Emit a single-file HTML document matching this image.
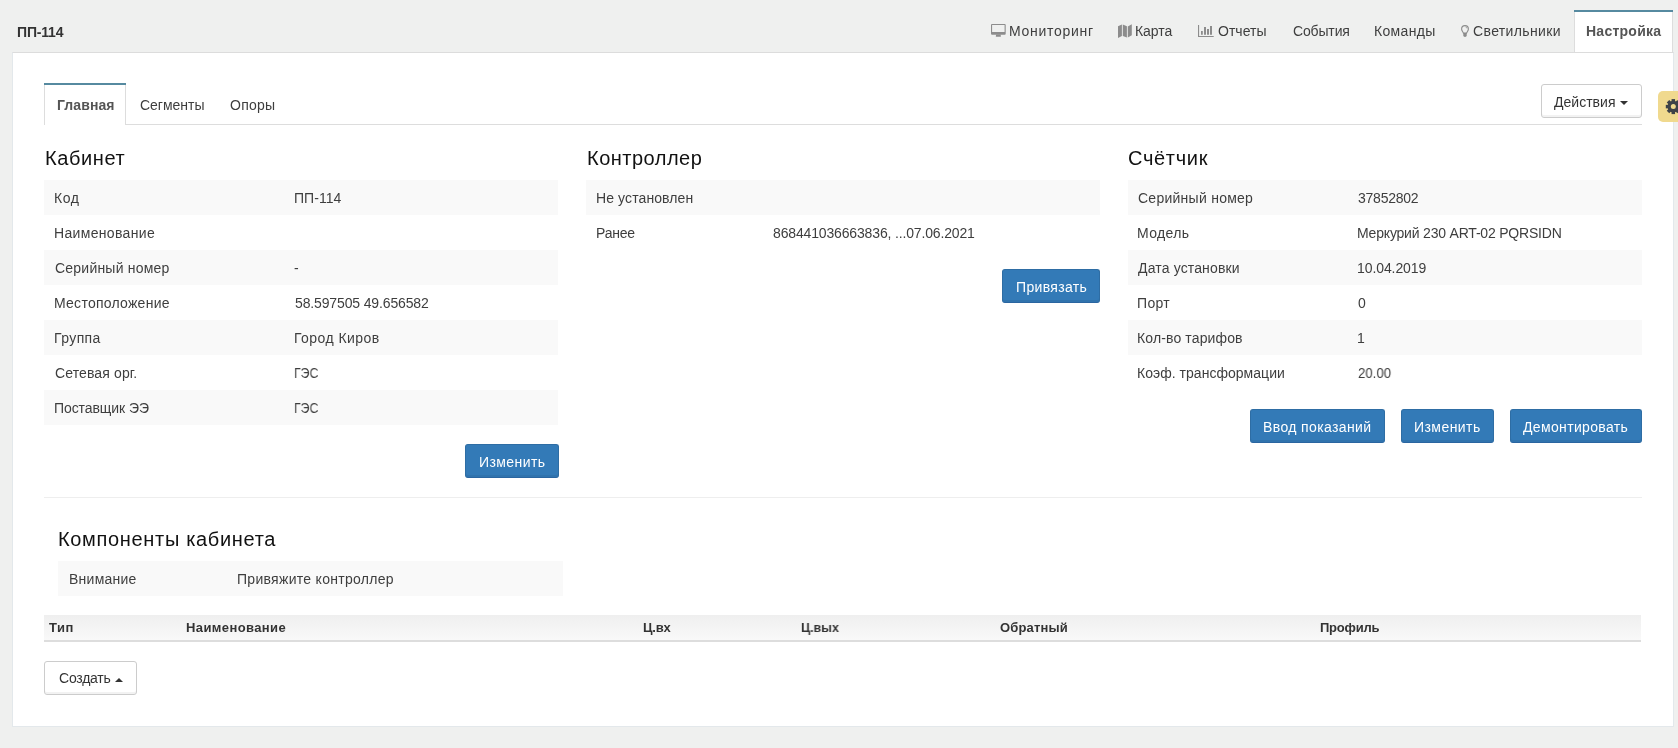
<!DOCTYPE html>
<html><head><meta charset="utf-8">
<style>
html,body{margin:0;padding:0;}
body{width:1678px;height:748px;overflow:hidden;position:relative;background:#eff0ef;font-family:"Liberation Sans",sans-serif;font-size:14px;color:#555;}
.a{position:absolute;}
.t{position:absolute;white-space:nowrap;will-change:transform;}
.panel{position:absolute;left:12px;top:52px;width:1660px;height:673px;background:#fff;border:1px solid #e3e8eb;border-top-color:#dcdcdc;}
.stripe{position:absolute;background:#f9f9f9;height:35px;}
.btnp{position:absolute;background:#337ab7;border:1px solid #2e6da4;border-bottom-color:#2a65a0;border-radius:3px;box-sizing:border-box;height:34px;box-shadow:inset 0 -2px 0 rgba(0,0,0,0.05);}
.btnd{position:absolute;background:#fff;border:1px solid #ccc;border-radius:3px;box-sizing:border-box;height:34px;box-shadow:inset 0 -2px 0 rgba(0,0,0,0.05);}
</style></head><body>

<!-- nav icons -->
<svg class="a" style="left:991px;top:24px" width="15" height="13" viewBox="0 0 15 13"><path fill-rule="evenodd" fill="#8c8c8c" d="M1,0 H13.7 Q14.7,0 14.7,1 V9.7 Q14.7,10.7 13.7,10.7 H1 Q0,10.7 0,9.7 V1 Q0,0 1,0 Z M1.1,1.1 V7.9 H13.6 V1.1 Z"/><path fill="#8c8c8c" d="M5.1,10.5 H9.6 L9.9,12.8 H4.8 Z"/></svg>
<svg class="a" style="left:1118px;top:24px" width="14" height="15" viewBox="0 0 14 15"><path fill="#8c8c8c" d="M0,2.2 L3.9,0.4 V11.9 L0,14 Z M4.8,0.4 L8.9,2.3 V13.6 L4.8,11.9 Z M9.8,2.5 L13.8,0.3 V11.3 L9.8,13.6 Z"/></svg>
<svg class="a" style="left:1198px;top:24px" width="16" height="14" viewBox="0 0 16 14"><path fill="#8c8c8c" d="M0,1 H1.1 V11.9 H15.7 V12.9 H0 Z M3,7 H4.8 V10.7 H3 Z M6,3 H8 V10.7 H6 Z M9,5 H11 V10.7 H9 Z M12,2 H14 V10.7 H12 Z"/></svg>
<svg class="a" style="left:1461px;top:25px" width="8" height="12" viewBox="0 0 8 12"><path d="M4,0.6 C1.8,0.6 0.6,2.3 0.6,4.1 C0.6,5.9 2,6.9 2.4,8.1 H5.6 C6,6.9 7.4,5.9 7.4,4.1 C7.4,2.3 6.2,0.6 4,0.6 Z" fill="none" stroke="#8c8c8c" stroke-width="1.1"/><path d="M2.3,8 H5.7 V10.6 Q5.7,11.9 4,11.9 Q2.3,11.9 2.3,10.6 Z" fill="#8c8c8c"/><path d="M4.6,2 Q5.8,2.4 6,3.4" fill="none" stroke="#8c8c8c" stroke-width="0.8"/></svg>

<!-- panel -->
<div class="panel"></div>

<!-- active nav tab -->
<div class="a" style="left:1574px;top:10px;width:97px;height:42px;background:#fff;border-left:1px solid #ddd;border-right:1px solid #ddd;"></div>
<div class="a" style="left:1574px;top:10px;width:99px;height:2px;background:#568aa0;"></div>

<!-- gear tab -->
<div class="a" style="left:1658px;top:91px;width:30px;height:31px;background:#f0d98e;border-radius:5px;"></div>
<svg class="a" style="left:1665px;top:98px" width="17" height="17" viewBox="-8.3 -8.6 17 17"><g fill="#3e4248"><circle r="5.8"/><rect x="-1.75" y="-7.5" width="3.5" height="15"/><rect x="-1.75" y="-7.5" width="3.5" height="15" transform="rotate(45)"/><rect x="-1.75" y="-7.5" width="3.5" height="15" transform="rotate(90)"/><rect x="-1.75" y="-7.5" width="3.5" height="15" transform="rotate(135)"/></g><circle r="2.5" fill="#f0d98e"/></svg>

<!-- sub tabs -->
<div class="a" style="left:44px;top:124px;width:1598px;height:1px;background:#ddd;"></div>
<div class="a" style="left:44px;top:83px;width:80px;height:42px;background:#fff;border-left:1px solid #ddd;border-right:1px solid #ddd;"></div>
<div class="a" style="left:44px;top:83px;width:82px;height:2px;background:#568aa0;"></div>

<div class="btnd" style="left:1541px;top:84px;width:101px;"></div>
<svg class="a" style="left:1620px;top:101px" width="8" height="4" viewBox="0 0 8 4"><path d="M0 0 H8 L4 4 Z" fill="#333"/></svg>

<!-- stripes -->
<div class="stripe" style="left:44px;top:180px;width:514px;"></div>
<div class="stripe" style="left:44px;top:250px;width:514px;"></div>
<div class="stripe" style="left:44px;top:320px;width:514px;"></div>
<div class="stripe" style="left:44px;top:390px;width:514px;"></div>
<div class="stripe" style="left:586px;top:180px;width:514px;"></div>
<div class="stripe" style="left:1128px;top:180px;width:514px;"></div>
<div class="stripe" style="left:1128px;top:250px;width:514px;"></div>
<div class="stripe" style="left:1128px;top:320px;width:514px;"></div>

<!-- buttons -->
<div class="btnp" style="left:465px;top:444px;width:94px;"></div>
<div class="btnp" style="left:1002px;top:269px;width:98px;"></div>
<div class="btnp" style="left:1250px;top:409px;width:135px;"></div>
<div class="btnp" style="left:1401px;top:409px;width:93px;"></div>
<div class="btnp" style="left:1510px;top:409px;width:132px;"></div>

<!-- hr -->
<div class="a" style="left:44px;top:497px;width:1598px;height:1px;background:#eee;"></div>

<div class="stripe" style="left:58px;top:561px;width:505px;"></div>

<!-- table header -->
<div class="a" style="left:44px;top:615px;width:1597px;height:25px;background:linear-gradient(#efefef,#f9f9f9);border-bottom:2px solid #ddd;"></div>

<div class="btnd" style="left:44px;top:661px;width:93px;"></div>
<svg class="a" style="left:115px;top:678px" width="8" height="4" viewBox="0 0 8 4"><path d="M0 4 H8 L4 0 Z" fill="#333"/></svg>

<div class="t" style="left:17.15px;top:22.15px;font-size:14px;line-height:20px;font-weight:bold;color:#333;letter-spacing:-0.187px;">ПП-114</div>
<div class="t" style="left:1008.60px;top:21.15px;font-size:14px;line-height:20px;font-weight:normal;color:#3e3e3e;letter-spacing:0.718px;">Мониторинг</div>
<div class="t" style="left:1134.50px;top:21.15px;font-size:14px;line-height:20px;font-weight:normal;color:#3e3e3e;letter-spacing:-0.044px;">Карта</div>
<div class="t" style="left:1217.90px;top:21.15px;font-size:14px;line-height:20px;font-weight:normal;color:#3e3e3e;letter-spacing:0.034px;">Отчеты</div>
<div class="t" style="left:1292.90px;top:21.15px;font-size:14px;line-height:20px;font-weight:normal;color:#3e3e3e;letter-spacing:-0.152px;">События</div>
<div class="t" style="left:1374.40px;top:21.15px;font-size:14px;line-height:20px;font-weight:normal;color:#3e3e3e;letter-spacing:0.325px;">Команды</div>
<div class="t" style="left:1472.70px;top:21.15px;font-size:14px;line-height:20px;font-weight:normal;color:#3e3e3e;letter-spacing:0.372px;">Светильники</div>
<div class="t" style="left:1585.70px;top:21.15px;font-size:14px;line-height:20px;font-weight:bold;color:#555;letter-spacing:0.256px;">Настройка</div>
<div class="t" style="left:56.70px;top:95.15px;font-size:14px;line-height:20px;font-weight:bold;color:#555;letter-spacing:0.089px;">Главная</div>
<div class="t" style="left:139.60px;top:95.15px;font-size:14px;line-height:20px;font-weight:normal;color:#3e3e3e;letter-spacing:-0.023px;">Сегменты</div>
<div class="t" style="left:230.00px;top:95.15px;font-size:14px;line-height:20px;font-weight:normal;color:#3e3e3e;letter-spacing:0.239px;">Опоры</div>
<div class="t" style="left:1554.30px;top:92.15px;font-size:14px;line-height:20px;font-weight:normal;color:#333;letter-spacing:0.020px;">Действия</div>
<div class="t" style="left:44.70px;top:144.07px;font-size:20px;line-height:28px;font-weight:normal;color:#111;letter-spacing:0.616px;">Кабинет</div>
<div class="t" style="left:586.70px;top:144.07px;font-size:20px;line-height:28px;font-weight:normal;color:#111;letter-spacing:0.495px;">Контроллер</div>
<div class="t" style="left:1127.50px;top:144.07px;font-size:20px;line-height:28px;font-weight:normal;color:#111;letter-spacing:0.698px;">Счётчик</div>
<div class="t" style="left:54.40px;top:188.15px;font-size:14px;line-height:20px;font-weight:normal;color:#3e3e3e;letter-spacing:0.533px;">Код</div>
<div class="t" style="left:54.40px;top:223.15px;font-size:14px;line-height:20px;font-weight:normal;color:#3e3e3e;letter-spacing:0.331px;">Наименование</div>
<div class="t" style="left:55.40px;top:258.15px;font-size:14px;line-height:20px;font-weight:normal;color:#3e3e3e;letter-spacing:0.219px;">Серийный номер</div>
<div class="t" style="left:54.40px;top:293.15px;font-size:14px;line-height:20px;font-weight:normal;color:#3e3e3e;letter-spacing:0.257px;">Местоположение</div>
<div class="t" style="left:54.40px;top:328.15px;font-size:14px;line-height:20px;font-weight:normal;color:#3e3e3e;letter-spacing:0.403px;">Группа</div>
<div class="t" style="left:55.40px;top:363.15px;font-size:14px;line-height:20px;font-weight:normal;color:#3e3e3e;letter-spacing:0.120px;">Сетевая орг.</div>
<div class="t" style="left:54.40px;top:398.15px;font-size:14px;line-height:20px;font-weight:normal;color:#3e3e3e;letter-spacing:-0.077px;">Поставщик ЭЭ</div>
<div class="t" style="left:293.60px;top:188.15px;font-size:14px;line-height:20px;font-weight:normal;color:#3e3e3e;letter-spacing:0.036px;">ПП-114</div>
<div class="t" style="left:294.40px;top:258.15px;font-size:14px;line-height:20px;font-weight:normal;color:#3e3e3e;letter-spacing:0.000px;">-</div>
<div class="t" style="left:294.50px;top:293.15px;font-size:14px;line-height:20px;font-weight:normal;color:#3e3e3e;letter-spacing:-0.137px;">58.597505 49.656582</div>
<div class="t" style="left:293.50px;top:328.15px;font-size:14px;line-height:20px;font-weight:normal;color:#3e3e3e;letter-spacing:0.450px;">Город Киров</div>
<div class="t" style="left:293.63px;top:363.15px;font-size:14px;line-height:20px;font-weight:normal;color:#3e3e3e;letter-spacing:0.000px;transform:scaleX(0.8745);transform-origin:0 0;">ГЭС</div>
<div class="t" style="left:293.63px;top:398.15px;font-size:14px;line-height:20px;font-weight:normal;color:#3e3e3e;letter-spacing:0.000px;transform:scaleX(0.8745);transform-origin:0 0;">ГЭС</div>
<div class="t" style="left:596.40px;top:188.15px;font-size:14px;line-height:20px;font-weight:normal;color:#3e3e3e;letter-spacing:0.103px;">Не установлен</div>
<div class="t" style="left:596.40px;top:223.15px;font-size:14px;line-height:20px;font-weight:normal;color:#3e3e3e;letter-spacing:-0.219px;">Ранее</div>
<div class="t" style="left:772.80px;top:223.15px;font-size:14px;line-height:20px;font-weight:normal;color:#3e3e3e;letter-spacing:-0.152px;">868441036663836, ...07.06.2021</div>
<div class="t" style="left:1138.20px;top:188.15px;font-size:14px;line-height:20px;font-weight:normal;color:#3e3e3e;letter-spacing:0.257px;">Серийный номер</div>
<div class="t" style="left:1137.20px;top:223.15px;font-size:14px;line-height:20px;font-weight:normal;color:#3e3e3e;letter-spacing:0.349px;">Модель</div>
<div class="t" style="left:1138.20px;top:258.15px;font-size:14px;line-height:20px;font-weight:normal;color:#3e3e3e;letter-spacing:0.150px;">Дата установки</div>
<div class="t" style="left:1137.20px;top:293.15px;font-size:14px;line-height:20px;font-weight:normal;color:#3e3e3e;letter-spacing:0.324px;">Порт</div>
<div class="t" style="left:1137.20px;top:328.15px;font-size:14px;line-height:20px;font-weight:normal;color:#3e3e3e;letter-spacing:0.133px;">Кол-во тарифов</div>
<div class="t" style="left:1137.20px;top:363.15px;font-size:14px;line-height:20px;font-weight:normal;color:#3e3e3e;letter-spacing:0.031px;">Коэф. трансформации</div>
<div class="t" style="left:1357.70px;top:188.15px;font-size:14px;line-height:20px;font-weight:normal;color:#3e3e3e;letter-spacing:-0.243px;">37852802</div>
<div class="t" style="left:1356.70px;top:223.15px;font-size:14px;line-height:20px;font-weight:normal;color:#3e3e3e;letter-spacing:-0.198px;">Меркурий 230 ART-02 PQRSIDN</div>
<div class="t" style="left:1356.70px;top:258.15px;font-size:14px;line-height:20px;font-weight:normal;color:#3e3e3e;letter-spacing:-0.087px;">10.04.2019</div>
<div class="t" style="left:1357.70px;top:293.15px;font-size:14px;line-height:20px;font-weight:normal;color:#3e3e3e;letter-spacing:0.000px;">0</div>
<div class="t" style="left:1356.70px;top:328.15px;font-size:14px;line-height:20px;font-weight:normal;color:#3e3e3e;letter-spacing:0.000px;">1</div>
<div class="t" style="left:1357.70px;top:363.15px;font-size:14px;line-height:20px;font-weight:normal;color:#3e3e3e;letter-spacing:0.000px;transform:scaleX(0.9447);transform-origin:0 0;">20.00</div>
<div class="t" style="left:478.60px;top:452.15px;font-size:14px;line-height:20px;font-weight:normal;color:#fff;letter-spacing:0.406px;">Изменить</div>
<div class="t" style="left:1015.60px;top:277.15px;font-size:14px;line-height:20px;font-weight:normal;color:#fff;letter-spacing:0.345px;">Привязать</div>
<div class="t" style="left:1263.40px;top:417.15px;font-size:14px;line-height:20px;font-weight:normal;color:#fff;letter-spacing:0.381px;">Ввод показаний</div>
<div class="t" style="left:1413.90px;top:417.15px;font-size:14px;line-height:20px;font-weight:normal;color:#fff;letter-spacing:0.435px;">Изменить</div>
<div class="t" style="left:1523.40px;top:417.15px;font-size:14px;line-height:20px;font-weight:normal;color:#fff;letter-spacing:0.351px;">Демонтировать</div>
<div class="t" style="left:57.90px;top:525.07px;font-size:20px;line-height:28px;font-weight:normal;color:#111;letter-spacing:0.674px;">Компоненты кабинета</div>
<div class="t" style="left:68.60px;top:569.15px;font-size:14px;line-height:20px;font-weight:normal;color:#3e3e3e;letter-spacing:0.250px;">Внимание</div>
<div class="t" style="left:236.90px;top:569.15px;font-size:14px;line-height:20px;font-weight:normal;color:#3e3e3e;letter-spacing:0.292px;">Привяжите контроллер</div>
<div class="t" style="left:49.00px;top:618.50px;font-size:13px;line-height:18px;font-weight:bold;color:#333;letter-spacing:0.581px;">Тип</div>
<div class="t" style="left:186.20px;top:618.50px;font-size:13px;line-height:18px;font-weight:bold;color:#333;letter-spacing:0.396px;">Наименование</div>
<div class="t" style="left:642.60px;top:618.50px;font-size:13px;line-height:18px;font-weight:bold;color:#333;letter-spacing:-0.167px;">Ц.вх</div>
<div class="t" style="left:800.90px;top:618.50px;font-size:13px;line-height:18px;font-weight:bold;color:#333;letter-spacing:0.000px;transform:scaleX(0.9602);transform-origin:0 0;">Ц.вых</div>
<div class="t" style="left:999.70px;top:618.50px;font-size:13px;line-height:18px;font-weight:bold;color:#333;letter-spacing:0.167px;">Обратный</div>
<div class="t" style="left:1319.80px;top:618.50px;font-size:13px;line-height:18px;font-weight:bold;color:#333;letter-spacing:-0.225px;">Профиль</div>
<div class="t" style="left:58.80px;top:668.15px;font-size:14px;line-height:20px;font-weight:normal;color:#333;letter-spacing:-0.235px;">Создать</div>
</body></html>
